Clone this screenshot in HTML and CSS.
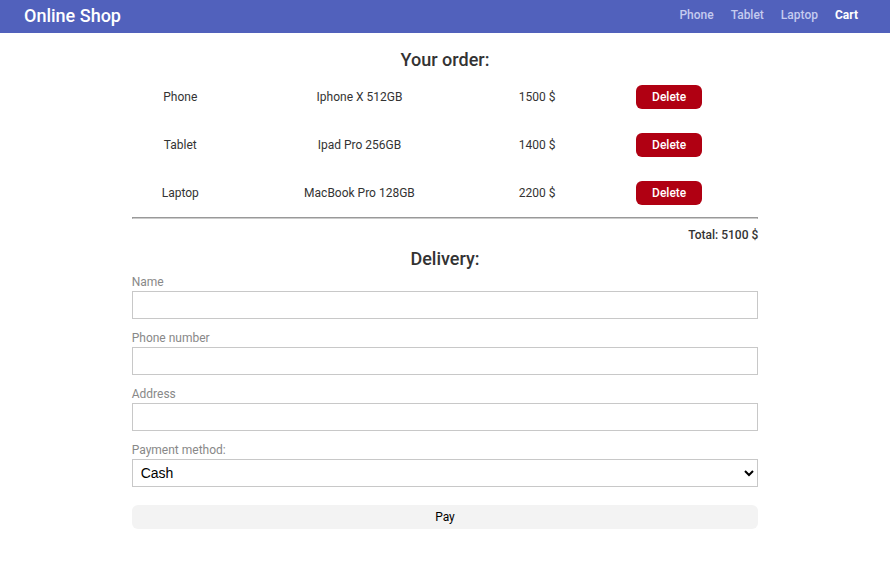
FILE: index.html
```html
<!DOCTYPE html>
<html lang="en">
<head>
<meta charset="utf-8">
<meta name="viewport" content="width=device-width, initial-scale=1">
<title>Online Shop</title>
<link rel="stylesheet" href="styles.css">
</head>
<body>
<header class="header">
  <a class="logo" href="#">Online Shop</a>
  <nav class="nav">
    <a class="nav-link" href="#">Phone</a>
    <a class="nav-link" href="#">Tablet</a>
    <a class="nav-link" href="#">Laptop</a>
    <a class="nav-link active" href="#" aria-current="page">Cart</a>
  </nav>
</header>
<main class="cart">
  <h2 class="title">Your order:</h2>
  <table class="order">
    <colgroup><col class="col-type"><col class="col-name"><col class="col-price"><col></colgroup>
    <tbody>
      <tr><td>Phone</td><td>Iphone X 512GB</td><td>1500 $</td><td><button class="btn delete" type="button">Delete</button></td></tr>
      <tr><td>Tablet</td><td>Ipad Pro 256GB</td><td>1400 $</td><td><button class="btn delete" type="button">Delete</button></td></tr>
      <tr><td>Laptop</td><td>MacBook Pro 128GB</td><td>2200 $</td><td><button class="btn delete" type="button">Delete</button></td></tr>
    </tbody>
  </table>
  <hr class="rule">
  <p class="total">Total: 5100 $</p>
  <h2 class="title">Delivery:</h2>
  <form class="form">
    <div class="field">
      <label for="name">Name</label>
      <input class="control" id="name" type="text">
    </div>
    <div class="field">
      <label for="phone">Phone number</label>
      <input class="control" id="phone" type="tel">
    </div>
    <div class="field">
      <label for="address">Address</label>
      <input class="control" id="address" type="text">
    </div>
    <div class="field">
      <label for="payment">Payment method:</label>
      <select class="control" id="payment"><option>Cash</option><option>Card</option></select>
    </div>
    <button class="btn pay" type="submit">Pay</button>
  </form>
</main>
</body>
</html>
```
FILE: styles.css
```css
* {
  box-sizing: border-box;
}

body {
  margin: 0;
  background: #fff;
  color: #333;
  font: 12px/16px Roboto, sans-serif;
}

.header {
  display: flex;
  align-items: flex-start;
  justify-content: space-between;
  padding: 4px 32px 5px 24px;
  background: #5161bc;
}

.logo {
  color: #fff;
  font-size: 18px;
  line-height: 24px;
  font-weight: 500;
  text-decoration: none;
}

.nav {
  display: flex;
  gap: 17px;
  padding-top: 3px;
}

.nav-link {
  color: #c5cbef;
  font-weight: 500;
  text-decoration: none;
}

.nav-link.active {
  color: #fff;
  font-weight: 700;
}

.cart {
  width: 70.4%;
  margin: 0 auto;
  padding-top: 15px;
}

.title {
  margin: 0 0 1px;
  font-size: 18px;
  line-height: 24px;
  font-weight: 500;
  text-align: center;
}

.order {
  width: 100%;
  table-layout: fixed;
  border-collapse: collapse;
}

.col-type {
  width: 15.5%;
}

.col-name {
  width: 41.7%;
}

.col-price {
  width: 15%;
}

.order td {
  height: 48px;
  padding: 0;
  text-align: center;
}

.order td:last-child {
  padding-right: 4px;
}

.btn {
  height: 24px;
  padding: 0 16px;
  border: 0;
  border-radius: 6px;
  font: inherit;
}

.delete {
  background: #b00012;
  color: #fff;
  font-weight: 500;
}

.rule {
  height: 2px;
  margin: 0;
  border: 1px solid #999;
  border-bottom-color: #ccc;
}

.total {
  margin: 8px 0 4px;
  font-weight: 500;
  text-align: right;
}

.form {
  padding-top: 2px;
}

.field {
  display: flex;
  flex-direction: column;
  gap: 1px;
  margin-bottom: 11px;
}

.field label {
  color: #888;
}

.control {
  width: 100%;
  height: 28px;
  padding: 0 4px;
  border: 1px solid #c8c8c8;
  border-radius: 0;
  background: #fff;
  color: #000;
  font: 14px "Liberation Sans", sans-serif;
}

.pay {
  width: 100%;
  margin-top: 7px;
  background: #f3f3f3;
  color: #000;
}
```
